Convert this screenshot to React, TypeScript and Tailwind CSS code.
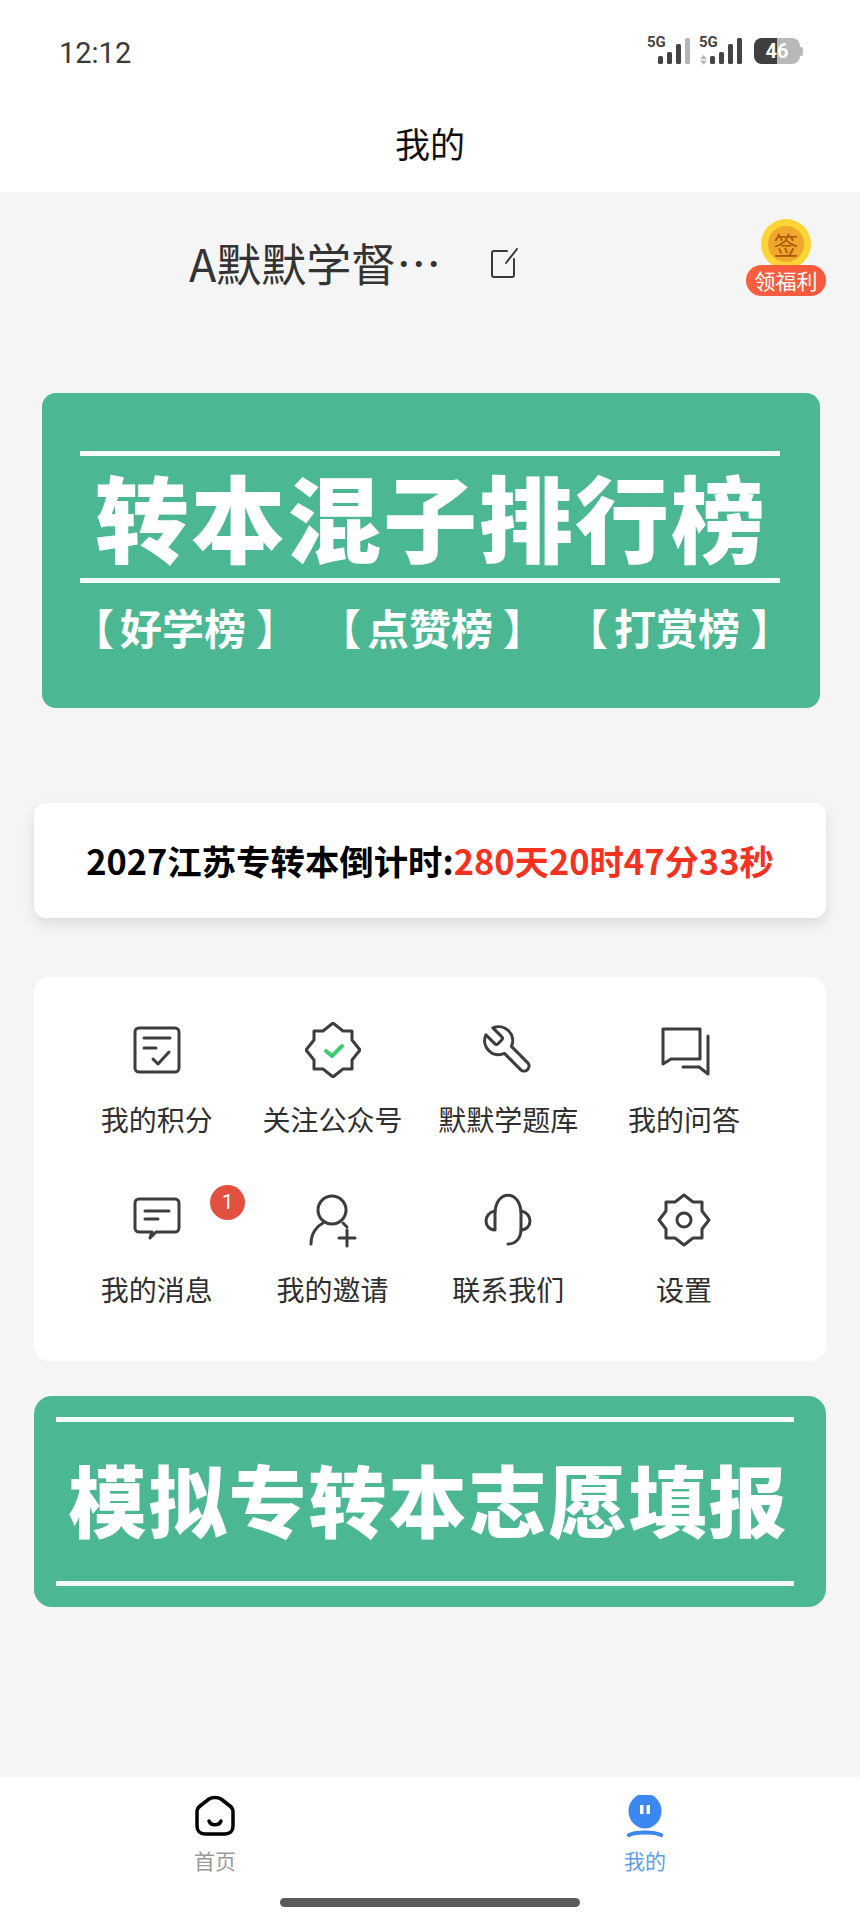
const cjk = "font-['Noto_Sans_CJK_SC','Noto_Sans',sans-serif]";

function StatusIcons() {
  return (
    <div className="flex items-end mt-[2px]">
      <div className="relative w-[50px] h-[28px]">
        <span className="absolute left-0 top-[-2px] text-[15px] leading-[12px] font-bold text-[#444] font-['Roboto',sans-serif]">5G</span>
        <svg width="50" height="28" viewBox="0 0 50 28" className="absolute inset-0" fill="#444">
          <rect x="11" y="18" width="5" height="8" rx="1.5" />
          <rect x="20" y="14" width="5" height="12" rx="1.5" />
          <rect x="29" y="6" width="5" height="20" rx="1.5" />
          <rect x="38" y="0" width="5" height="26" rx="1.5" fill="#b5b5b5" />
        </svg>
      </div>
      <div className="relative w-[52px] h-[28px] ml-[2px]">
        <span className="absolute left-0 top-[-2px] text-[15px] leading-[12px] font-bold text-[#444] font-['Roboto',sans-serif]">5G</span>
        <svg width="52" height="28" viewBox="0 0 52 28" className="absolute inset-0" fill="#444">
          <path d="M1 21l3.5-4 3.5 4zM1 22.5h7l-3.5 4z" fill="#b5b5b5" />
          <rect x="11" y="18" width="5" height="8" rx="1.5" />
          <rect x="20" y="14" width="5" height="12" rx="1.5" />
          <rect x="29" y="6" width="5" height="20" rx="1.5" />
          <rect x="38" y="0" width="5" height="26" rx="1.5" />
        </svg>
      </div>
      <div className="relative ml-[3px] mb-[2px] flex items-center">
        <div className="relative w-[46px] h-[26px] rounded-[8px] overflow-hidden bg-[#b8b8b8]">
          <div className="absolute left-0 top-0 bottom-0 w-[23px] bg-[#3f3f3f]" />
          <div className="absolute inset-0 flex items-center justify-center text-white text-[20px] font-bold font-['Roboto',sans-serif]">46</div>
        </div>
        <div className="w-[3px] h-[9px] rounded-r-[2px] bg-[#b8b8b8]" />
      </div>
    </div>
  );
}

function RankGroup({ name }: { name: string }) {
  return (
    <span>
      【<span className="ml-[6px] mr-[10px]">{name}</span>】
    </span>
  );
}

const iconProps = {
  width: 56,
  height: 56,
  viewBox: "0 0 56 56",
  fill: "none",
  stroke: "#3d3d3d",
  strokeWidth: 3,
  strokeLinecap: "round" as const,
  strokeLinejoin: "round" as const,
};

const menu = [
  {
    label: "我的积分",
    icon: (
      <svg {...iconProps}>
        <rect x="6" y="6" width="44" height="44" rx="4" />
        <path d="M15 16h26M15 26h12M24 37l5 5 11-12" />
      </svg>
    ),
  },
  {
    label: "关注公众号",
    icon: (
      <svg {...iconProps}>
        <path d="M28 1L38 9H47V18L55 28L47 38V47H38L28 55L18 47H9V38L1 28L9 18V9H18Z" />
        <path d="M21 29l6 5 10-10" stroke="#3fcb72" strokeWidth="4" />
      </svg>
    ),
  },
  {
    label: "默默学题库",
    icon: (
      <svg {...iconProps} viewBox="0 0 24 24" strokeWidth={1.3}>
        <g transform="translate(24 0) scale(-1 1)">
          <path d="M14.700 6.300a1 1 0 0 0 0 1.400l1.600 1.600a1 1 0 0 0 1.400 0l3.770-3.770a6 6 0 0 1-7.940 7.940l-6.910 6.910a2.120 2.120 0 0 1-3-3l6.910-6.910a6 6 0 0 1 7.940-7.940l-3.760 3.760z" />
        </g>
      </svg>
    ),
  },
  {
    label: "我的问答",
    icon: (
      <svg {...iconProps}>
        <path d="M7 38V7h37v30H15l-8 5z" />
        <path d="M52 14v38l-9-7H27" />
      </svg>
    ),
  },
  {
    label: "我的消息",
    badge: 1,
    icon: (
      <svg {...iconProps}>
        <path d="M10 7h36a4 4 0 0 1 4 4v25a4 4 0 0 1-4 4H27l-6 6 2-6H10a4 4 0 0 1-4-4V11a4 4 0 0 1 4-4z" />
        <path d="M16 19h24M16 27h13" />
      </svg>
    ),
  },
  {
    label: "我的邀请",
    icon: (
      <svg {...iconProps}>
        <circle cx="27" cy="18" r="14" />
        <path d="M6 52c0-11 6-18 12-21M38 31l4 4M42 38v16M34 46h16" />
      </svg>
    ),
  },
  {
    label: "联系我们",
    icon: (
      <svg {...iconProps}>
        <path d="M15 37V22c0-25 26-25 26 0v15c0 9-5 15-13 15" />
        <path d="M15 19c-12 2-12 18 0 19M41 19c12 2 12 18 0 19" />
      </svg>
    ),
  },
  {
    label: "设置",
    icon: (
      <svg {...iconProps}>
        <path d="M28 3L37 10H46V19L53 28L46 37V46H37L28 53L19 46H10V37L3 28L10 19V10H19Z" />
        <circle cx="28" cy="28" r="7" />
      </svg>
    ),
  },
];

export default function App() {
  return (
    <div className={`w-[860px] h-[1920px] flex flex-col bg-[#f5f5f5] overflow-hidden ${cjk}`}>
      <div className="bg-white h-[192px] shrink-0">
        <div className="h-[118px] flex items-start justify-between pl-[59px] pr-[57px] pt-[36px]">
          <span className="text-[29px] leading-[34px] text-[#3a3a3a] font-['Roboto',sans-serif]">12:12</span>
          <StatusIcons />
        </div>
        <div className="text-center text-[35px] leading-[50px] text-[#111]">我的</div>
      </div>

      <div className="relative h-[201px] shrink-0 pl-[189px] pt-[40px]">
        <div className="flex items-center">
          <span className="w-[301px] text-[45px] leading-[62px] text-[#333]">A默默学督…</span>
          <svg width="30" height="30" viewBox="0 0 30 30" fill="none" stroke="#3a3a3a" strokeWidth="2" strokeLinecap="round" strokeLinejoin="round">
            <path d="M17 3H4a2 2 0 0 0-2 2v22a2 2 0 0 0 2 2h18a2 2 0 0 0 2-2V11" />
            <path d="M16 15L27 1" />
          </svg>
        </div>
        {/* sign-in coin sits over the header row */}
        <div className="absolute left-[746px] top-[27px] w-[80px] flex flex-col items-center">
          <div className="w-[50px] h-[50px] rounded-full bg-[#fbd435] flex items-center justify-center">
            <div className="w-[36px] h-[36px] rounded-full bg-[#f1a72b] text-[#a9590a] text-[25px] leading-[36px] text-center">签</div>
          </div>
          <div className="mt-[-4px] w-[80px] h-[31px] rounded-full bg-gradient-to-r from-[#fb5f3e] to-[#f4593c] text-white text-[21px] leading-[31px] text-center">领福利</div>
        </div>
      </div>

      <div className="mx-[42px] w-[778px] h-[315px] shrink-0 rounded-[14px] bg-[#4cb893] text-white pt-[58px]">
        <div className="h-[5px] ml-[38px] mr-[40px] bg-[#f4fbf8]" />
        <div className="h-[122px] flex items-center justify-center">
          <div className="text-[94px] leading-[118px] font-black tracking-[2px] pb-[4px] whitespace-nowrap">转本混子排行榜</div>
        </div>
        <div className="h-[5px] ml-[38px] mr-[40px] bg-[#f4fbf8]" />
        <div className="flex gap-[21px] pl-[30px] pt-[16px] text-[42px] leading-[56px] font-bold">
          <RankGroup name="好学榜" />
          <RankGroup name="点赞榜" />
          <RankGroup name="打赏榜" />
        </div>
      </div>

      <div className="mt-[95px] mx-[34px] h-[115px] shrink-0 rounded-[12px] bg-white shadow-[0_6px_14px_rgba(0,0,0,0.10)] flex items-center justify-center text-[34.400px] font-bold text-black">
        <span>2027江苏专转本倒计时:<span className="text-[#f5311f]">280天20时47分33秒</span></span>
      </div>

      <div className="mt-[59px] mx-[34px] h-[384px] shrink-0 rounded-[16px] bg-white pl-[35px] pr-[54px] pt-[45px] grid grid-cols-4 auto-rows-[170px]">
        {menu.map((m) => (
          <div key={m.label} className="relative flex flex-col items-center">
            {m.icon}
            <span className="mt-[22px] text-[28px] leading-[38px] text-[#2f2f2f] whitespace-nowrap">{m.label}</span>
            {m.badge && (
              <span className="absolute left-[141px] top-[-7px] w-[35px] h-[35px] rounded-full bg-[#e2513f] text-white text-[20px] leading-[35px] text-center font-['Roboto',sans-serif]">
                {m.badge}
              </span>
            )}
          </div>
        ))}
      </div>

      <div className="mt-[35px] mx-[34px] h-[211px] shrink-0 rounded-[18px] bg-[#4cb893] text-white pt-[21px]">
        <div className="h-[5px] ml-[22px] mr-[32px] bg-[#f4fbf8]" />
        <div className="h-[159px] flex items-center justify-center text-[78px] leading-[110px] font-black tracking-[2px] pr-[3px] pb-[7px]">模拟专转本志愿填报</div>
        <div className="h-[5px] ml-[22px] mr-[32px] bg-[#f4fbf8]" />
      </div>

      <div className="mt-[170px] flex-1 bg-white relative">
        <div className="grid grid-cols-2 pt-[18px]">
          <div className="flex flex-col items-center">
            <svg width="40" height="42" viewBox="0 0 40 42" fill="none" stroke="#000" strokeWidth="3.500" strokeLinecap="round" strokeLinejoin="round">
              <path d="M14 4c3-2 9-2 12 0l9 7c2 1.500 3 3 3 6v14c0 5-3 8-8 8H10c-5 0-8-3-8-8V17c0-3 1-4.500 3-6z" />
              <path d="M14 26c2 5 10 5 12 0" />
            </svg>
            <span className="mt-[8px] text-[21px] leading-[30px] text-[#999]">首页</span>
          </div>
          <div className="flex flex-col items-center">
            <svg width="40" height="42" viewBox="0 0 40 42">
              <ellipse cx="20" cy="16" rx="16.500" ry="17.500" fill="#3b88f0" />
              <rect x="15" y="10" width="3.500" height="9" fill="#fff" />
              <rect x="21.500" y="10" width="3.500" height="9" fill="#fff" />
              <path d="M4 40c6-3.500 26-3.500 32 0" stroke="#3b88f0" strokeWidth="4" fill="none" strokeLinecap="round" />
            </svg>
            <span className="mt-[8px] text-[21px] leading-[30px] text-[#5f9deb]">我的</span>
          </div>
        </div>
        <div className="absolute left-[280px] top-[121px] w-[300px] h-[9px] rounded-full bg-[#5a5a5a]" />
      </div>
    </div>
  );
}
